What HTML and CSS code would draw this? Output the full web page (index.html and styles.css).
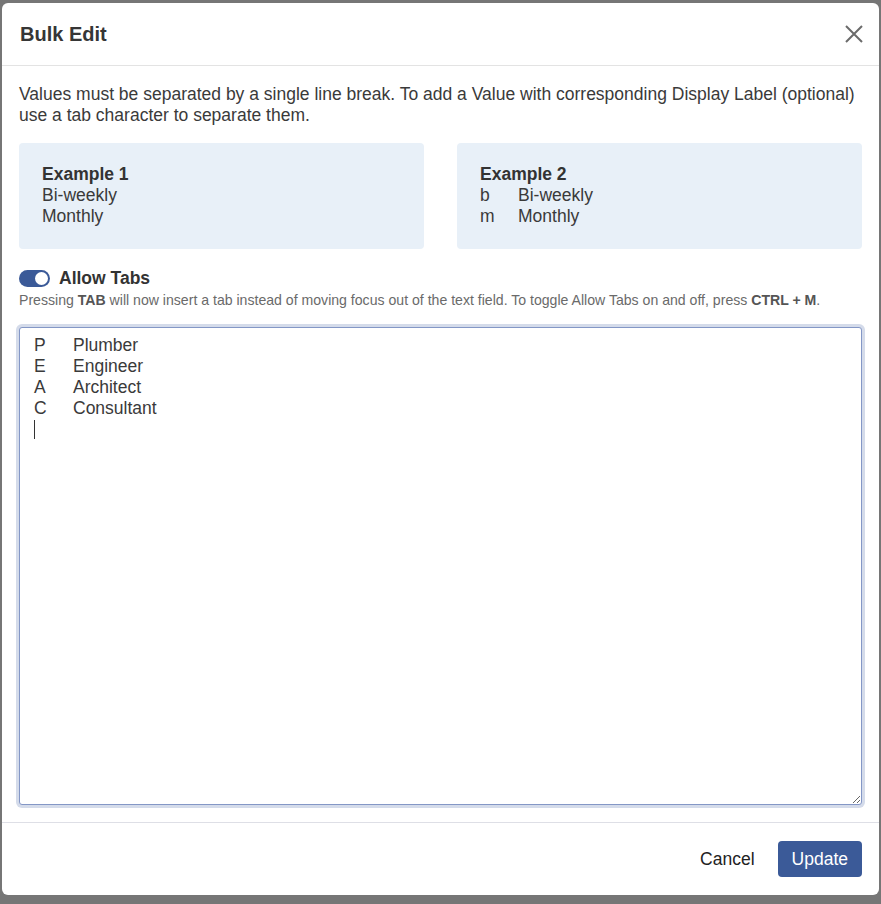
FILE: index.html
```html
<!DOCTYPE html>
<html>
  <head>
    <title>Bulk Edit</title>
    <link rel="stylesheet" href="styles.css">
  </head>
  <body>
    <div class="modal">
      <div class="modal-header">
        <h2>Bulk Edit</h2>
        <button class="close" aria-label="Close">
          <svg width="18" height="18" viewBox="0 0 18 18">
            <path d="M1 1 L17 17 M17 1 L1 17" stroke="#6b6b6b" stroke-width="2" fill="none"/>
          </svg>
        </button>
      </div>
      <div class="modal-body">
        <p class="intro">Values must be separated by a single line break. To add a Value with corresponding Display Label (optional) use a tab character to separate them.</p>
        <div class="examples">
          <div class="example">
            <strong>Example 1</strong>
            <div>Bi-weekly</div>
            <div>Monthly</div>
          </div>
          <div class="example">
            <strong>Example 2</strong>
            <div class="tabbed">b	Bi-weekly</div>
            <div class="tabbed">m	Monthly</div>
          </div>
        </div>
        <label class="toggle-row">
          <span class="toggle"><span class="knob"></span></span>
          <span class="toggle-label">Allow Tabs</span>
        </label>
        <p class="hint">Pressing <b>TAB</b> will now insert a tab instead of moving focus out of the text field. To toggle Allow Tabs on and off, press <b>CTRL + M</b>.</p>
        <div class="field">
          <textarea class="values">P	Plumber
E	Engineer
A	Architect
C	Consultant
</textarea>
          <span class="caret"></span>
        </div>
      </div>
      <div class="modal-footer">
        <button class="btn-link">Cancel</button>
        <button class="btn-primary">Update</button>
      </div>
    </div>
  </body>
</html>
```

FILE: styles.css
```css
html, body {
  margin: 0;
  padding: 0;
  height: 100%;
  background: #767676;
  font: normal 17.5px "Liberation Sans", Arial, sans-serif;
  color: #3a3a3a;
}

.modal {
  display: flex;
  flex-direction: column;
  width: 877px;
  height: 892px;
  margin: 3px 0 0 2px;
  background: #ffffff;
  border-radius: 6px;
  box-sizing: border-box;
}

.modal-header {
  display: flex;
  align-items: center;
  justify-content: space-between;
  height: 63px;
  padding: 0 16px 0 18px;
  border-bottom: 1px solid #e3e3e3;
  box-sizing: border-box;
}

.modal-header h2 {
  margin: 0;
  font-size: 20px;
  font-weight: bold;
  color: #363636;
}

.close {
  padding: 0;
  margin: 0;
  border: none;
  background: none;
  line-height: 0;
}

.modal-body {
  flex: 1;
  display: flex;
  flex-direction: column;
  padding: 18px 17px 17px 17px;
}

.intro {
  margin: 0 0 17px 0;
  line-height: 21px;
}

.examples {
  display: grid;
  grid-template-columns: 1fr 1fr;
  gap: 33px;
}

.example {
  padding: 21px 23px 22px;
  line-height: 21px;
  background: #e8f0f8;
  border-radius: 4px;
}

.example strong {
  display: block;
  color: #333333;
}

.tabbed {
  white-space: pre;
  tab-size: 38px;
}

.toggle-row {
  display: flex;
  align-items: center;
  gap: 9px;
  height: 21px;
  margin: 19px 0 0 0;
}

.toggle {
  display: inline-flex;
  justify-content: flex-end;
  align-items: center;
  width: 31px;
  height: 17px;
  padding: 0 2px;
  background: #3b5a98;
  border-radius: 9px;
  box-sizing: border-box;
}

.knob {
  width: 13px;
  height: 13px;
  background: #ffffff;
  border-radius: 50%;
}

.toggle-label {
  font-weight: bold;
  color: #333333;
}

.hint {
  margin: 3px 0 19px 0;
  font-size: 14.1px;
  line-height: 16px;
  color: #6a6a6a;
}

.hint b {
  color: #555555;
}

.field {
  position: relative;
  flex: 1;
  display: flex;
}

.values {
  flex: 1;
  display: block;
  width: 100%;
  padding: 7px 14px 5px;
  font: normal 17.5px "Liberation Sans", Arial, sans-serif;
  line-height: 21px;
  color: #3a3a3a;
  tab-size: 39px;
  border: 1px solid #8497c6;
  border-radius: 3px;
  box-shadow: 0 0 0 3px #d4dbea;
  outline: none;
  box-sizing: border-box;
  resize: vertical;
}

.caret {
  position: absolute;
  left: 15px;
  top: 93px;
  width: 1px;
  height: 19px;
  background: #333333;
}

.modal-footer {
  display: flex;
  justify-content: flex-end;
  align-items: center;
  gap: 23px;
  height: 73px;
  padding: 0 17px;
  border-top: 1px solid #dedfe6;
  box-sizing: border-box;
}

.btn-link {
  padding: 0;
  border: none;
  background: none;
  font: normal 17.5px "Liberation Sans", Arial, sans-serif;
  color: #222222;
}

.btn-primary {
  height: 36px;
  padding: 0 14px;
  border: none;
  border-radius: 4px;
  background: #3b5a98;
  font: normal 17.5px "Liberation Sans", Arial, sans-serif;
  color: #ffffff;
}
```
